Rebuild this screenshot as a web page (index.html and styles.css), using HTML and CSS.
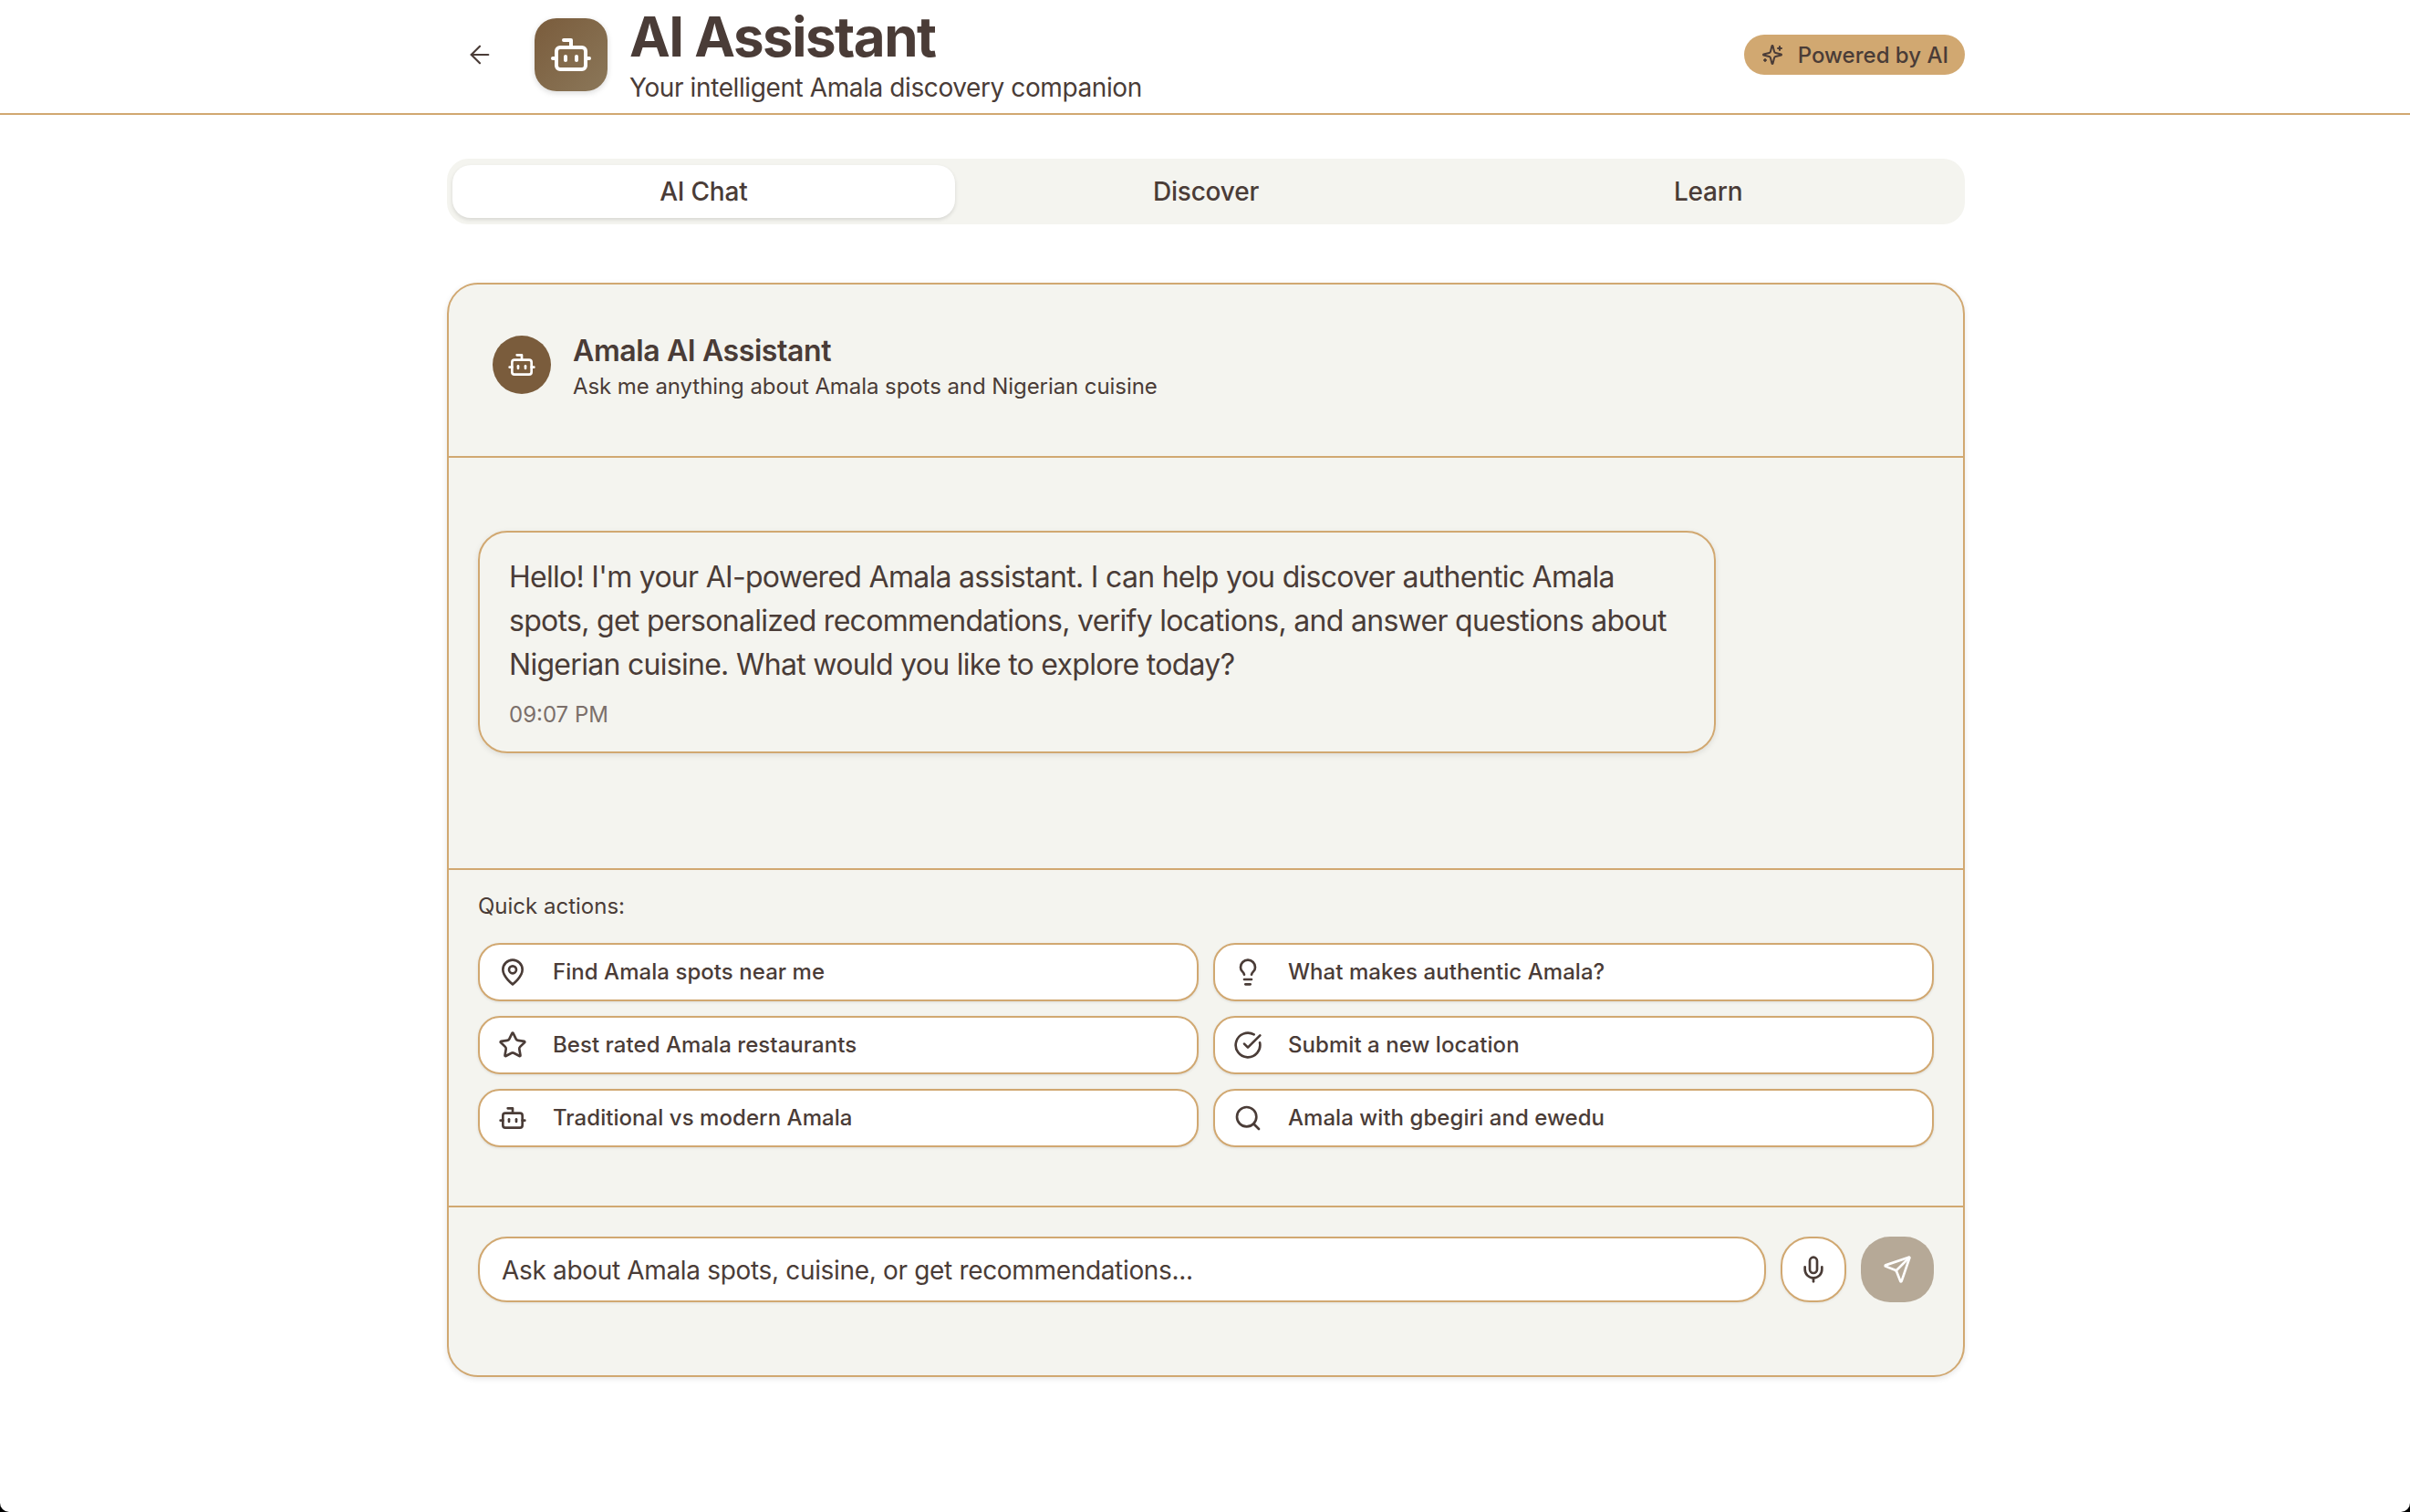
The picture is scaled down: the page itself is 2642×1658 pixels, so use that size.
FILE: index.html

```html
<!DOCTYPE html>
<html lang="en">
<head>
  <meta charset="UTF-8">
  <meta name="viewport" content="width=device-width, initial-scale=1">
  <title>AI Assistant</title>
  <link rel="stylesheet" href="styles.css">
</head>
<body>

  <svg class="sprite" xmlns="http://www.w3.org/2000/svg">
    <symbol id="i-bot" viewBox="0 0 24 24"><path d="M12 8V4H8"/><rect width="16" height="12" x="4" y="8" rx="2"/><path d="M2 14h2"/><path d="M20 14h2"/><path d="M15 13v2"/><path d="M9 13v2"/></symbol>
  </svg>

  <div class="window">
    <header class="topbar">
      <div class="topbar-inner">
        <button class="back" aria-label="Back">
          <svg class="icon" viewBox="0 0 24 24"><path d="m12 19-7-7 7-7"/><path d="M19 12H5"/></svg>
        </button>
        <div class="logo">
          <svg class="icon logo-icon"><use href="#i-bot"/></svg>
        </div>
        <div class="titles">
          <h1>AI Assistant</h1>
          <p>Your intelligent Amala discovery companion</p>
        </div>
        <div class="badge">
          <svg class="icon badge-icon" viewBox="0 0 24 24"><path d="M9.937 15.5A2 2 0 0 0 8.5 14.063l-6.135-1.582a.5.5 0 0 1 0-.962L8.5 9.936A2 2 0 0 0 9.937 8.5l1.582-6.135a.5.5 0 0 1 .963 0L14.063 8.5A2 2 0 0 0 15.5 9.937l6.135 1.581a.5.5 0 0 1 0 .964L15.5 14.063a2 2 0 0 0-1.437 1.437l-1.582 6.135a.5.5 0 0 1-.963 0z"/><path d="M20 3v4"/><path d="M22 5h-4"/><path d="M4 17v2"/><path d="M5 18H3"/></svg>
          Powered by AI
        </div>
      </div>
    </header>

    <main class="page">
      <nav class="tabs">
        <button class="tab active">AI Chat</button>
        <button class="tab">Discover</button>
        <button class="tab">Learn</button>
      </nav>

      <section class="card">
        <div class="card-head">
          <div class="avatar">
            <svg class="icon avatar-icon"><use href="#i-bot"/></svg>
          </div>
          <div>
            <h2>Amala AI Assistant</h2>
            <p>Ask me anything about Amala spots and Nigerian cuisine</p>
          </div>
        </div>

        <div class="messages">
          <div class="bubble">
            <p>Hello! I'm your AI-powered Amala assistant. I can help you discover authentic Amala spots, get personalized recommendations, verify locations, and answer questions about Nigerian cuisine. What would you like to explore today?</p>
            <span class="time">09:07 PM</span>
          </div>
        </div>

        <div class="quick">
          <div class="quick-label">Quick actions:</div>
          <div class="quick-grid">
            <button class="action">
              <svg class="icon" viewBox="0 0 24 24"><path d="M20 10c0 6-8 12-8 12s-8-6-8-12a8 8 0 0 1 16 0Z"/><circle cx="12" cy="10" r="3"/></svg>
              Find Amala spots near me
            </button>
            <button class="action">
              <svg class="icon" viewBox="0 0 24 24"><path d="M15 14c.2-1 .7-1.7 1.5-2.5 1-.9 1.5-2.2 1.5-3.5A6 6 0 0 0 6 8c0 1 .2 2.2 1.5 3.5.7.7 1.3 1.5 1.5 2.5"/><path d="M9 18h6"/><path d="M10 22h4"/></svg>
              What makes authentic Amala?
            </button>
            <button class="action">
              <svg class="icon" viewBox="0 0 24 24"><path d="M11.525 2.295a.53.53 0 0 1 .95 0l2.31 4.679a2.123 2.123 0 0 0 1.595 1.16l5.166.756a.53.53 0 0 1 .294.904l-3.736 3.638a2.123 2.123 0 0 0-.611 1.878l.882 5.14a.53.53 0 0 1-.771.56l-4.618-2.428a2.122 2.122 0 0 0-1.973 0L6.396 21.01a.53.53 0 0 1-.77-.56l.881-5.139a2.122 2.122 0 0 0-.611-1.879L2.16 9.795a.53.53 0 0 1 .294-.906l5.165-.755a2.122 2.122 0 0 0 1.597-1.16z"/></svg>
              Best rated Amala restaurants
            </button>
            <button class="action">
              <svg class="icon" viewBox="0 0 24 24"><path d="M21.801 10A10 10 0 1 1 17 3.335"/><path d="m9 11 3 3L22 4"/></svg>
              Submit a new location
            </button>
            <button class="action">
              <svg class="icon"><use href="#i-bot"/></svg>
              Traditional vs modern Amala
            </button>
            <button class="action">
              <svg class="icon" viewBox="0 0 24 24"><path d="m21 21-4.34-4.34"/><circle cx="11" cy="11" r="8"/></svg>
              Amala with gbegiri and ewedu
            </button>
          </div>
        </div>

        <form class="composer">
          <input class="composer-input" type="text" placeholder="Ask about Amala spots, cuisine, or get recommendations...">
          <button class="mic" type="button" aria-label="Voice input">
            <svg class="icon" viewBox="0 0 24 24"><path d="M12 19v3"/><path d="M19 10v2a7 7 0 0 1-14 0v-2"/><rect x="9" y="2" width="6" height="13" rx="3"/></svg>
          </button>
          <button class="send" type="submit" aria-label="Send">
            <svg class="icon" viewBox="0 0 24 24"><path d="M14.536 21.686a.5.5 0 0 0 .937-.024l6.5-19a.496.496 0 0 0-.635-.635l-19 6.5a.5.5 0 0 0-.024.937l7.93 3.18a2 2 0 0 1 1.112 1.11z"/><path d="m21.854 2.147-10.94 10.939"/></svg>
          </button>
        </form>
      </section>
    </main>
  </div>

</body>
</html>
```

FILE: styles.css

```css
* {
  box-sizing: border-box;
}

html, body {
  margin: 0;
  height: 100%;
  background-color: #000;
}

body {
  font-family: Inter, "Liberation Sans", sans-serif;
  color: #4a3c37;
  overflow: hidden;
}

button, input {
  font-family: inherit;
  color: inherit;
}

h1, h2, p {
  margin: 0;
}

.sprite {
  display: none;
}

.icon {
  width: 32px;
  height: 32px;
  flex: none;
  fill: none;
  stroke: currentColor;
  stroke-width: 2;
  stroke-linecap: round;
  stroke-linejoin: round;
}

.window {
  height: 100%;
  background-color: #fff;
  border-radius: 0 0 10px 10px;
  overflow: hidden;
}

.topbar {
  height: 126px;
  border-bottom: 2px solid #d1a871;
}

.topbar-inner {
  width: 1664px;
  height: 120px;
  margin-left: 490px;
  display: flex;
  align-items: center;
}

.back {
  width: 72px;
  height: 72px;
  margin-right: 24px;
  padding: 0;
  border: none;
  background: none;
  display: flex;
  align-items: center;
  justify-content: center;
}

.back .icon {
  stroke-width: 1.6;
}

.logo {
  width: 80px;
  height: 80px;
  margin-right: 24px;
  border-radius: 24px;
  background: linear-gradient(135deg, #7a5c3c, #8b7759);
  box-shadow: 0 2px 6px rgba(0, 0, 0, 0.15);
  display: flex;
  align-items: center;
  justify-content: center;
  color: #fff;
}

.logo-icon {
  width: 48px;
  height: 48px;
}

.titles {
  flex: 1;
}

h1 {
  font-size: 60px;
  line-height: 72px;
  font-weight: 700;
  letter-spacing: -1.5px;
}

.titles p {
  font-size: 28px;
  line-height: 40px;
  letter-spacing: -0.4px;
}

.badge {
  height: 44px;
  padding: 0 18px 0 19px;
  border-radius: 22px;
  background-color: #d1a871;
  font-size: 24px;
  font-weight: 500;
  display: flex;
  align-items: center;
  gap: 16px;
}

.badge-icon {
  width: 24px;
  height: 24px;
}

.page {
  width: 1664px;
  margin-left: 490px;
  padding-top: 48px;
}

.tabs {
  height: 72px;
  padding: 7px 6px;
  border-radius: 24px;
  background-color: #f4f4ef;
  display: grid;
  grid-template-columns: repeat(3, 1fr);
}

.tab {
  border: none;
  border-radius: 20px;
  background: none;
  font-size: 28px;
  font-weight: 500;
  letter-spacing: -0.2px;
}

.tab.active {
  background-color: #fff;
  box-shadow: 0 2px 4px rgba(0, 0, 0, 0.12);
}

.card {
  margin-top: 64px;
  height: 1200px;
  border: 2px solid #d1a871;
  border-radius: 34px;
  background-color: #f4f4ef;
  box-shadow: 0 2px 6px rgba(0, 0, 0, 0.1);
}

.card-head {
  height: 188px;
  padding: 56px 48px 68px;
  display: flex;
  align-items: center;
  gap: 24px;
}

.avatar {
  width: 64px;
  height: 64px;
  border-radius: 50%;
  background-color: #7a5c3c;
  color: #fff;
  display: flex;
  align-items: center;
  justify-content: center;
}

h2 {
  margin-top: 2px;
  font-size: 32px;
  line-height: 44px;
  font-weight: 600;
  letter-spacing: -0.4px;
}

.card-head p {
  padding-top: 1px;
  font-size: 24px;
  line-height: 32px;
  letter-spacing: -0.07px;
}

.messages {
  height: 452px;
  padding: 80px 32px 0;
  border-top: 2px solid #d1a871;
}

.bubble {
  width: 1357px;
  height: 244px;
  padding: 25px 32px;
  border: 2px solid #d1a871;
  border-radius: 32px;
  box-shadow: 0 2px 6px rgba(0, 0, 0, 0.1);
}

.bubble p {
  font-size: 32px;
  line-height: 48px;
  letter-spacing: -0.71px;
}

.time {
  display: block;
  margin-top: 15px;
  font-size: 24px;
  line-height: 32px;
  color: #7b6f6a;
}

.quick {
  height: 370px;
  padding: 24px 32px 0;
  border-top: 2px solid #d1a871;
}

.quick-label {
  font-size: 24px;
  line-height: 32px;
  margin-bottom: 24px;
}

.quick-grid {
  display: grid;
  grid-template-columns: repeat(2, 1fr);
  gap: 16px;
}

.action {
  height: 64px;
  padding: 0 20px 1px;
  border: 2px solid #d1a871;
  border-radius: 24px;
  background-color: #fff;
  box-shadow: 0 1px 3px rgba(0, 0, 0, 0.1);
  font-size: 24px;
  font-weight: 500;
  letter-spacing: 0.05px;
  display: flex;
  align-items: center;
  gap: 28px;
}

.composer {
  padding: 32px;
  border-top: 2px solid #d1a871;
  display: flex;
  gap: 16px;
}

.composer-input {
  flex: 1;
  height: 72px;
  padding: 2px 24px 0;
  border: 2px solid #d1a871;
  border-radius: 32px;
  background-color: #fff;
  font-size: 28px;
  letter-spacing: -0.33px;
  box-shadow: 0 1px 3px rgba(0, 0, 0, 0.08);
}

.composer-input::placeholder {
  color: #4a3c37;
  opacity: 1;
}

.mic, .send {
  height: 72px;
  padding: 0;
  display: flex;
  align-items: center;
  justify-content: center;
}

.mic {
  width: 72px;
  border: 2px solid #d1a871;
  border-radius: 32px;
  background-color: #fff;
  box-shadow: 0 1px 3px rgba(0, 0, 0, 0.08);
}

.send {
  width: 80px;
  border: none;
  border-radius: 32px;
  background-color: #b6a997;
  color: #fff;
}
```
